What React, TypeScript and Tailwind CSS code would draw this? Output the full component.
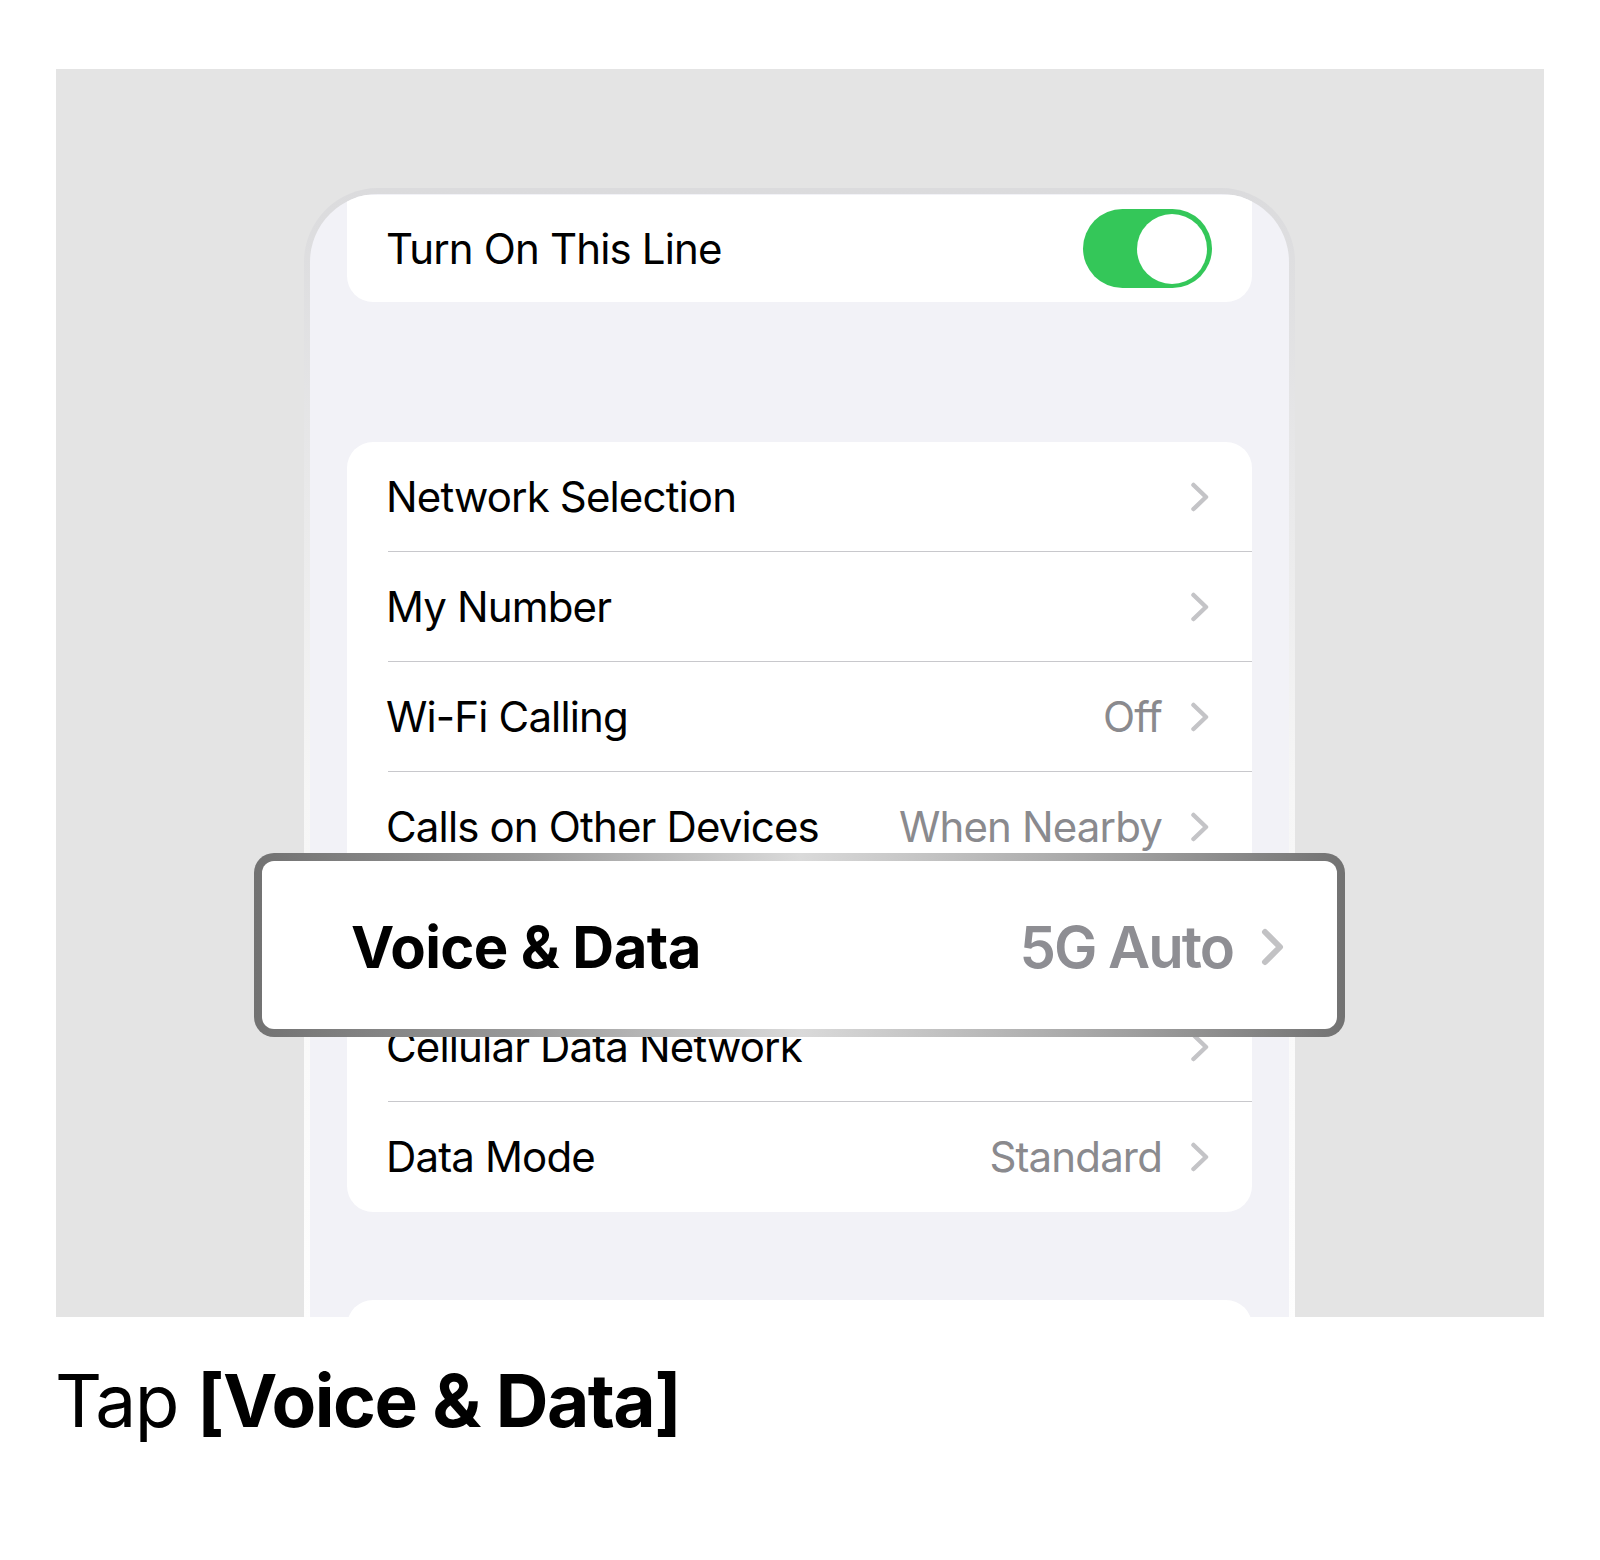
import React from "react";

function Chevron({ big = false }: { big?: boolean }) {
  if (big) {
    return (
      <svg width="24" height="38" viewBox="0 0 24 38" className="shrink-0">
        <polyline points="4,4 19,19 4,34" fill="none" stroke="#c2c2c4" strokeWidth="6" strokeLinecap="round" strokeLinejoin="round" />
      </svg>
    );
  }
  return (
    <svg width="20" height="30" viewBox="0 0 20 30" className="shrink-0">
      <polyline points="3.5,3 16,15 3.5,27" fill="none" stroke="#c4c4c7" strokeWidth="4.5" strokeLinecap="round" strokeLinejoin="round" />
    </svg>
  );
}

const rows: { label: string; value?: string }[] = [
  { label: "Network Selection" },
  { label: "My Number" },
  { label: "Wi-Fi Calling", value: "Off" },
  { label: "Calls on Other Devices", value: "When Nearby" },
  { label: "Voice & Data", value: "5G Auto" },
  { label: "Cellular Data Network" },
  { label: "Data Mode", value: "Standard" },
];

export default function App() {
  return (
    <div className="w-[1600px] h-[1560px] bg-white font-['Inter',sans-serif] text-black">
      <div className="h-[69px]" />
      <div className="relative ml-[56px] w-[1488px] h-[1248px] bg-[#e4e4e4] overflow-hidden">
        {/* phone */}
        <div className="ml-[248px] mt-[119px] w-[991px] rounded-t-[74px] bg-gradient-to-b from-[#dbdbdd] via-[#f6f6f6] to-white px-[6px] pt-[6px]">
          <div className="h-[1200px] rounded-t-[68px] bg-[#f2f2f7] overflow-hidden px-[37px] pt-[1px]">
            {/* top card */}
            <div className="h-[107px] bg-white rounded-b-[26px] rounded-t-[6px] flex items-center justify-between pl-[39px] pr-[40px]">
              <span className="text-[42px] leading-none tracking-[-0.85px]">Turn On This Line</span>
              <div className="relative w-[129px] h-[79px] rounded-full bg-[#34c759]">
                <div className="absolute right-[5px] top-[4.5px] w-[70px] h-[70px] rounded-full bg-white" />
              </div>
            </div>
            {/* list card */}
            <div className="mt-[140px] bg-white rounded-[26px] overflow-hidden">
              {rows.map((r, i) => (
                <div key={r.label} className="relative h-[110px] flex items-center pl-[39px] pr-[42px]">
                  <span className="flex-1 text-[42px] leading-none tracking-[-0.85px]">{r.label}</span>
                  {r.value && (
                    <span className="text-[42px] leading-none tracking-[-0.85px] text-[#8a8a8e] mr-[28px]">{r.value}</span>
                  )}
                  <Chevron />
                  {i < rows.length - 1 && (
                    <div className="absolute left-[41px] right-0 bottom-0 h-px bg-[#c8c8cc]" />
                  )}
                </div>
              ))}
            </div>
            {/* next card */}
            <div className="mt-[88px] h-[200px] bg-white rounded-[26px]" />
          </div>
        </div>

        {/* highlight box */}
        <div className="absolute left-[198px] top-[784px] w-[1091px] h-[184px] rounded-[20px] p-[8px] bg-[linear-gradient(to_right,#727272_0%,#9a9a9a_25%,#dadada_50%,#a0a0a0_80%,#727272_100%)]">
          <div className="w-full h-full rounded-[12px] bg-white flex items-center pl-[89px] pr-[52px] pt-[3px]">
            <span className="flex-1 text-[58px] leading-none font-bold tracking-[-0.6px]">Voice &amp; Data</span>
            <span className="text-[58px] leading-none font-semibold tracking-[-2px] text-[#8e8e93] mr-[28px]">5G Auto</span>
            <Chevron big />
          </div>
        </div>
      </div>

      {/* caption */}
      <div className="mt-[47px] ml-[55px] text-[73px] leading-none tracking-[-1.5px]">
        <span>Tap </span>
        <span className="font-bold">[Voice &amp; Data]</span>
      </div>
    </div>
  );
}
